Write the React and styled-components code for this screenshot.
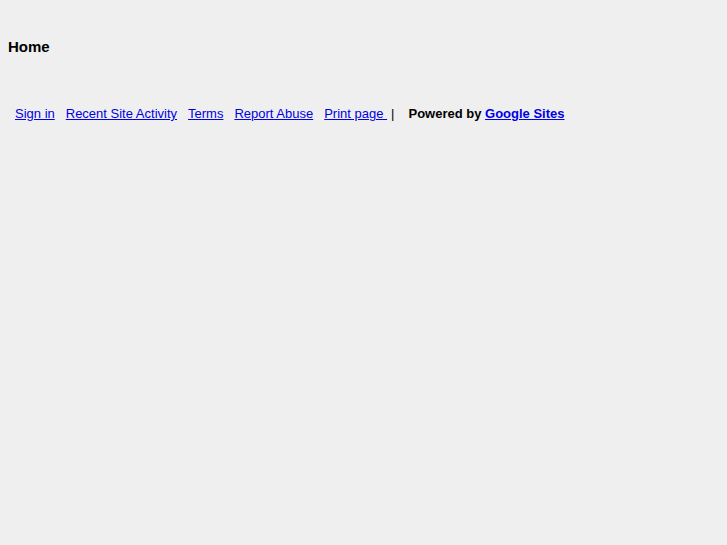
import React from 'react'
import styled, { createGlobalStyle } from 'styled-components'

const GlobalStyle = createGlobalStyle`
body{
  margin:0;
  background:#efefef;
  font-family:"Liberation Sans", Arial, sans-serif;
  color:#000;
}
`

const Page = styled.div`
padding:38px 8px 0 8px;
`

const Title = styled.h1`
margin:0;
font-size:15px;
font-weight:bold;
line-height:18px;
`

const Footer = styled.div`
margin-top:50px;
padding-left:7px;
font-size:13px;
line-height:16px;
display:flex;
align-items:baseline;
white-space:pre;
`

const FootLink = styled.a`
color:#0000e6;
text-decoration:underline;
margin-right:${p => p.gap || 11}px;
`

const Sep = styled.span`
margin-right:14px;
`

const Powered = styled.span`
font-weight:bold;
`

export default function App() {
  return (
    <Page>
      <GlobalStyle />
      <Title>Home</Title>
      <Footer>
        <FootLink href="#">Sign in</FootLink>
        <FootLink href="#">Recent Site Activity</FootLink>
        <FootLink href="#">Terms</FootLink>
        <FootLink href="#">Report Abuse</FootLink>
        <FootLink href="#" gap={4}>Print page </FootLink>
        <Sep>|</Sep>
        <Powered>Powered by <FootLink href="#">Google Sites</FootLink></Powered>
      </Footer>
    </Page>
  )
}
